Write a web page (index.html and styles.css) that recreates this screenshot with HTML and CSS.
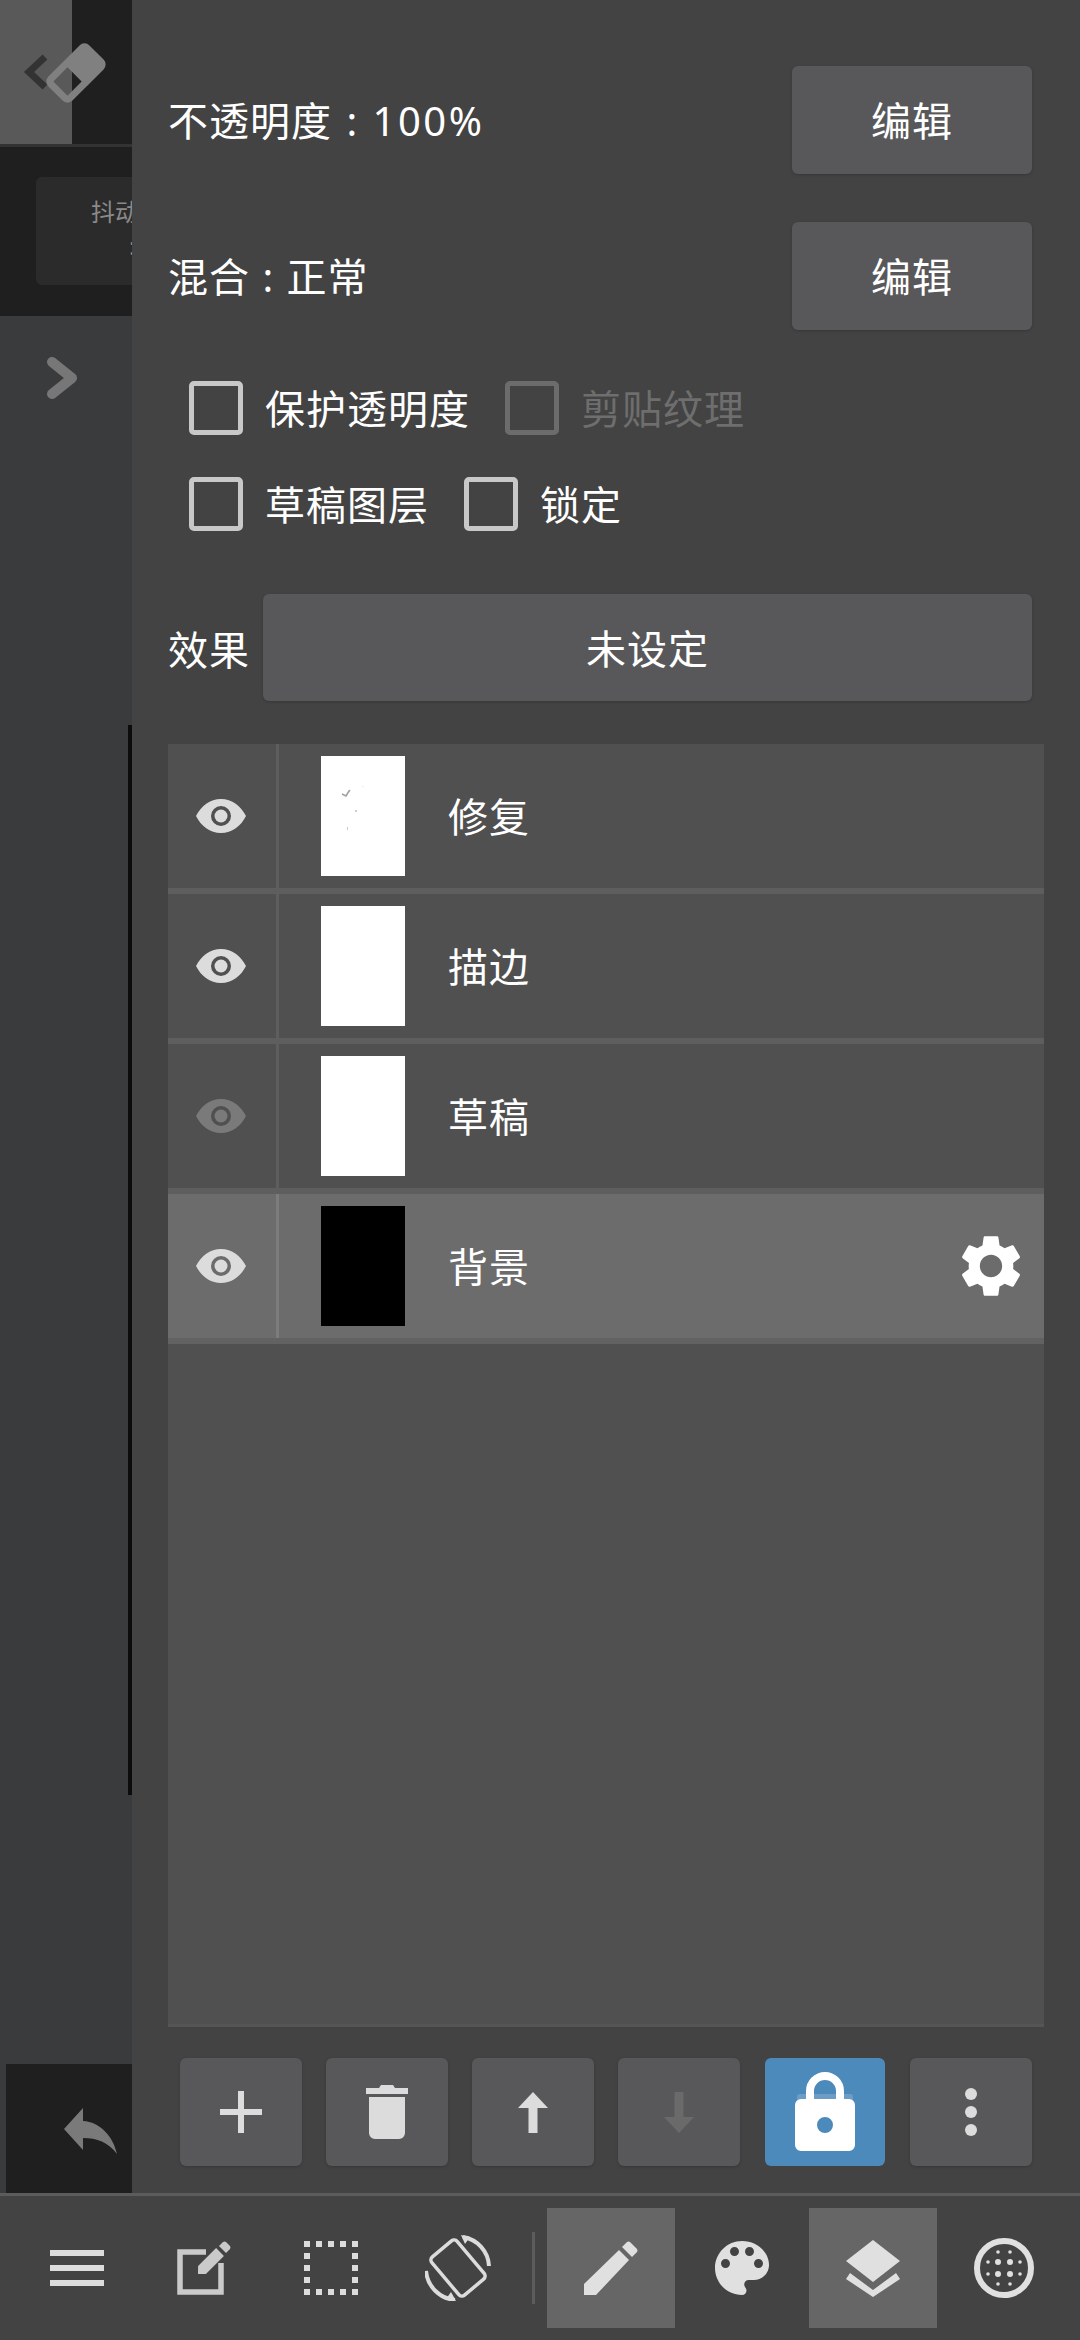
FILE: index.html
```html
<!DOCTYPE html>
<html>
<head>
    <title>图层</title>
    <link rel="stylesheet" href="styles.css">
</head>
<body>
<svg class="defs" width="0" height="0">
    <symbol id="eye" viewBox="0 0 50 34">
        <path fill-rule="evenodd" d="M0 17C5 7 14 0 25 0S45 7 50 17C45 27 36 34 25 34S5 27 0 17ZM25 7a10 10 0 1 0 0 20a10 10 0 1 0 0-20Z"/>
        <circle cx="25" cy="17" r="6.500"/>
    </symbol>
</svg>
<div class="app">
    <div class="main">
        <div class="side">
            <div class="side-top">
                <div class="side-tile"></div>
                <svg class="side-tool" width="132" height="144" viewBox="0 0 132 144">
                    <path d="M45 57L29 72L45 87" fill="none" stroke="#333" stroke-width="7"/>
                    <g transform="translate(76 73) rotate(-45)">
                        <path fill="#808080" fill-rule="evenodd" d="M-22 -17H22a7 7 0 0 1 7 7V10a7 7 0 0 1-7 7H-22a7 7 0 0 1-7-7V-10a7 7 0 0 1 7-7ZM-22 -10V10H-2V-10Z"/>
                    </g>
                </svg>
            </div>
            <div class="side-line"></div>
            <div class="side-dark">
                <div class="side-card">
                    <div class="card-title">抖动修正强度</div>
                    <div class="card-note">:</div>
                </div>
            </div>
            <div class="side-nav">
                <svg width="30" height="45" viewBox="0 0 30 45">
                    <path d="M5 6L25 22L5 38" fill="none" stroke="#777" stroke-width="10" stroke-linejoin="round" stroke-linecap="round"/>
                </svg>
            </div>
            <div class="side-undo">
                <svg width="53" height="46" viewBox="0 0 53 46">
                    <path fill="#7a7a7a" d="M0 21L19 0V13C36 14 49 28 53 46C44 34 33 30 19 30V42Z"/>
                </svg>
            </div>
            <div class="canvas-edge"></div>
        </div>

        <div class="panel">
            <div class="field">
                <span>不透明度 : <span class="num">100%</span></span>
                <div class="btn btn-edit">编辑</div>
            </div>
            <div class="field field-blend">
                <span>混合 : 正常</span>
                <div class="btn btn-edit">编辑</div>
            </div>

            <div class="checks">
                <div class="check"></div><span>保护透明度</span>
                <div class="check check-off"></div><span class="label-off">剪贴纹理</span>
            </div>
            <div class="checks checks-second">
                <div class="check"></div><span>草稿图层</span>
                <div class="check"></div><span>锁定</span>
            </div>

            <div class="effect">
                <span>效果</span>
                <div class="btn btn-effect">未设定</div>
            </div>

            <div class="layers">
                <div class="layer">
                    <div class="layer-eye"><svg width="50" height="34"><use href="#eye"/></svg></div>
                    <div class="thumb">
                        <svg width="84" height="120" viewBox="0 0 84 120">
                            <path d="M21 38L25 40L28 35M26 38L29 34" fill="none" stroke="#a0a0a0" stroke-width="1.500"/>
                            <rect x="34" y="54" width="2" height="2" fill="#ccc"/>
                            <rect x="26" y="71" width="1" height="3" fill="#ccc"/>
                            <rect x="41" y="30" width="2" height="1" fill="#eee"/>
                        </svg>
                    </div>
                    <div class="layer-name">修复</div>
                </div>
                <div class="layer">
                    <div class="layer-eye"><svg width="50" height="34"><use href="#eye"/></svg></div>
                    <div class="thumb"></div>
                    <div class="layer-name">描边</div>
                </div>
                <div class="layer">
                    <div class="layer-eye eye-off"><svg width="50" height="34"><use href="#eye"/></svg></div>
                    <div class="thumb"></div>
                    <div class="layer-name">草稿</div>
                </div>
                <div class="layer layer-active">
                    <div class="layer-eye"><svg width="50" height="34"><use href="#eye"/></svg></div>
                    <div class="thumb thumb-black"></div>
                    <div class="layer-name">背景</div>
                    <svg class="gear" width="62" height="62" viewBox="2 2 20 20">
                        <path fill="#fff" d="M19.14 12.94c.04-.3.06-.61.06-.94 0-.32-.02-.64-.07-.94l2.03-1.58c.18-.14.23-.41.12-.61l-1.92-3.32c-.12-.22-.37-.29-.59-.22l-2.39.96c-.5-.38-1.03-.7-1.62-.94l-.36-2.54c-.04-.24-.24-.41-.48-.41h-3.84c-.24 0-.43.17-.47.41l-.36 2.54c-.59.24-1.13.57-1.62.94l-2.39-.96c-.22-.08-.47 0-.59.22L2.74 8.87c-.12.21-.08.47.12.61l2.03 1.58c-.05.3-.09.63-.09.94s.02.64.07.94l-2.03 1.58c-.18.14-.23.41-.12.61l1.92 3.32c.12.22.37.29.59.22l2.39-.96c.5.38 1.03.7 1.62.94l.36 2.54c.05.24.24.41.48.41h3.84c.24 0 .44-.17.47-.41l.36-2.54c.59-.24 1.13-.56 1.62-.94l2.39.96c.22.08.47 0 .59-.22l1.92-3.32c.12-.22.07-.47-.12-.61l-2.01-1.58zM12 15.6c-1.98 0-3.6-1.62-3.6-3.6s1.62-3.6 3.6-3.6 3.6 1.62 3.6 3.6-1.62 3.6-3.6 3.6z"/>
                    </svg>
                </div>
            </div>

            <div class="actions">
                <div class="btn">
                    <svg width="42" height="42" viewBox="0 0 42 42"><path fill="#dcdcdc" d="M18 0h6v18h18v6H24v18h-6V24H0v-6h18Z"/></svg>
                </div>
                <div class="btn">
                    <svg width="42" height="54" viewBox="0 0 42 54">
                        <path fill="#dcdcdc" d="M0 3H13L15 0H27L29 3H42V9H0ZM3 12H39V48a6 6 0 0 1-6 6H9a6 6 0 0 1-6-6Z"/>
                    </svg>
                </div>
                <div class="btn">
                    <svg width="30" height="41" viewBox="0 0 30 41"><path fill="#dcdcdc" d="M15 0L30 16H19.500V41H10.500V16H0Z"/></svg>
                </div>
                <div class="btn">
                    <svg width="30" height="41" viewBox="0 0 30 41"><path fill="#6a6a6a" d="M15 41L30 25H19.500V0H10.500V25H0Z"/></svg>
                </div>
                <div class="btn btn-lock">
                    <svg width="60" height="80" viewBox="0 0 60 80">
                        <rect x="2" y="22" width="56" height="8" rx="3" fill="#6d9cc5"/>
                        <path d="M15 30V19a15 15 0 0 1 30 0V30" fill="none" stroke="#fff" stroke-width="8"/>
                        <path fill="#fff" fill-rule="evenodd" d="M6 27H54a6 6 0 0 1 6 6V73a6 6 0 0 1-6 6H6a6 6 0 0 1-6-6V33a6 6 0 0 1 6-6ZM30 45a8 8 0 1 0 0 16a8 8 0 1 0 0-16Z"/>
                    </svg>
                </div>
                <div class="btn">
                    <svg width="12" height="48" viewBox="0 0 12 48" fill="#dcdcdc">
                        <circle cx="6" cy="6" r="6"/><circle cx="6" cy="24" r="6"/><circle cx="6" cy="42" r="6"/>
                    </svg>
                </div>
            </div>
        </div>
    </div>

    <div class="toolbar">
        <div class="tool">
            <svg width="54" height="36" viewBox="0 0 54 36" fill="#dcdcdc">
                <rect width="54" height="6"/><rect y="15" width="54" height="6"/><rect y="30" width="54" height="6"/>
            </svg>
        </div>
        <div class="tool">
            <svg width="54" height="54" viewBox="0 0 54 54">
                <path d="M29 11H3V51H44V22" fill="none" stroke="#cacaca" stroke-width="5.500"/>
                <path fill="#cacaca" d="M21 33L21.100 25.100L39.100 7.100L46.900 14.900L28.900 32.900Z"/>
                <path fill="#cacaca" d="M42 5L46 1Q47.500 0 49 1L53 5Q54 6.500 53 8L49 12Z"/>
            </svg>
        </div>
        <div class="tool">
            <svg width="54" height="54" viewBox="0 0 54 54">
                <rect x="3" y="3" width="48" height="48" fill="none" stroke="#dcdcdc" stroke-width="6" stroke-dasharray="6 6" stroke-dashoffset="3"/>
            </svg>
        </div>
        <div class="tool">
            <svg width="66" height="66" viewBox="0 0 66 66" fill="none" stroke="#dcdcdc">
                <rect x="8" y="16.500" width="50" height="33" rx="4" stroke-width="3.500" transform="rotate(50 33 33)"/>
                <path d="M38 2A31 31 0 0 1 64 31" stroke-width="4"/>
                <path d="M1 36A32 32 0 0 0 30 65" stroke-width="4"/>
                <path d="M36 0L45 2L40 9Z" fill="#dcdcdc" stroke="none"/>
                <path d="M31 66L21 64L26 57Z" fill="#dcdcdc" stroke="none"/>
            </svg>
        </div>
        <div class="tool-divider"></div>
        <div class="tile tile-on">
            <svg width="54" height="54" viewBox="0 0 54 54" fill="#e0e0e0">
                <path d="M0 54V43L35 9L45 19L12 54Z"/>
                <path d="M38 6L43 1Q44.500 0 46 1L53 8Q54 9.500 53 11L48 16Z"/>
            </svg>
        </div>
        <div class="tile">
            <svg width="54" height="54" viewBox="3 3 18 18">
                <path fill="#e0e0e0" d="M12 3c-4.970 0-9 4.030-9 9s4.030 9 9 9c.83 0 1.500-.67 1.500-1.500 0-.39-.15-.74-.39-1.010-.23-.26-.38-.61-.38-.99 0-.83.67-1.500 1.500-1.500H16c2.760 0 5-2.240 5-5 0-4.420-4.030-8-9-8zm-5.500 9c-.83 0-1.500-.67-1.500-1.500S5.670 9 6.500 9 8 9.670 8 10.500 7.330 12 6.500 12zm3-4C8.670 8 8 7.330 8 6.500S8.670 5 9.500 5s1.500.67 1.500 1.500S10.330 8 9.500 8zm5 0c-.83 0-1.500-.67-1.500-1.500S13.670 5 14.500 5s1.500.67 1.500 1.500S15.330 8 14.500 8zm3 4c-.83 0-1.500-.67-1.500-1.500S16.670 9 17.500 9s1.500.67 1.500 1.500-.67 1.500-1.500 1.500z"/>
            </svg>
        </div>
        <div class="tile tile-on">
            <svg width="54" height="57" viewBox="0 0 54 57" fill="#e0e0e0">
                <path d="M27 0L54 21L27 42L0 21Z"/>
                <path d="M4 33L27 50L50 33L54 39L27 57L0 39Z"/>
            </svg>
        </div>
        <div class="tile">
            <svg width="60" height="60" viewBox="0 0 60 60" fill="#e0e0e0">
                <circle cx="30" cy="30" r="27" fill="none" stroke="#e0e0e0" stroke-width="6"/>
                <circle cx="24" cy="24" r="3"/><circle cx="36" cy="24" r="3"/>
                <circle cx="24" cy="36" r="3"/><circle cx="36" cy="36" r="3"/>
                <circle cx="24" cy="14" r="1.800"/><circle cx="36" cy="14" r="1.800"/>
                <circle cx="24" cy="46" r="1.800"/><circle cx="36" cy="46" r="1.800"/>
                <circle cx="14" cy="24" r="1.800"/><circle cx="14" cy="36" r="1.800"/>
                <circle cx="46" cy="24" r="1.800"/><circle cx="46" cy="36" r="1.800"/>
            </svg>
        </div>
    </div>
</div>
</body>
</html>
```

FILE: styles.css
```css
* { box-sizing: border-box; }
body {
    margin: 0;
    background-color: #434343;
    font-family: "Noto Sans", "Noto Sans CJK SC", sans-serif;
    font-size: 40px;
    letter-spacing: 1px;
    color: #fff;
}
svg { display: block; }
.defs { position: absolute; }
.app {
    width: 1080px;
    height: 2340px;
    display: flex;
    flex-direction: column;
    overflow: hidden;
}
.main {
    height: 2193px;
    display: flex;
}

/* strip of the canvas showing behind the panel */
.side {
    position: relative;
    width: 132px;
    display: flex;
    flex-direction: column;
    background-color: #3a3b3d;
    overflow: hidden;
}
.side-top {
    position: relative;
    height: 144px;
    background-color: #1f1f1f;
}
.side-tile {
    width: 72px;
    height: 144px;
    background-color: #595959;
}
.side-tool {
    position: absolute;
    left: 0;
    top: 0;
}
.side-line {
    height: 3px;
    background-color: #333;
}
.side-dark {
    height: 169px;
    padding: 30px 0 0 36px;
    background-color: #1f1f1f;
}
.side-card {
    width: 300px;
    height: 108px;
    padding: 18px 0 0 55px;
    border-radius: 6px;
    background-color: #2b2b2b;
    font-size: 24px;
    letter-spacing: 0;
    line-height: 34px;
    color: #8a8a8a;
}
.card-title { white-space: nowrap; }
.card-note { padding-left: 38px; }
.side-nav {
    flex: 1;
    padding: 40px 0 0 47px;
}
.side-undo {
    height: 129px;
    margin-left: 6px;
    padding: 44px 0 0 58px;
    background-color: #1f1f1f;
}
.canvas-edge {
    position: absolute;
    left: 128px;
    top: 725px;
    width: 4px;
    height: 1070px;
    background-color: #0c0c0c;
}

/* layer panel */
.panel {
    flex: 1;
    padding: 66px 36px 0;
    background-color: #434343;
}
.field {
    height: 108px;
    display: flex;
    justify-content: space-between;
    align-items: center;
    padding-right: 12px;
    word-spacing: 3px;
}
.field > span { padding-bottom: 2px; }
.num { letter-spacing: 2.500px; }
.field-blend {
    margin-top: 48px;
    word-spacing: 1px;
}
.btn {
    display: flex;
    justify-content: center;
    align-items: center;
    border-radius: 6px;
    background-color: #58585a;
    box-shadow: 0 1px 3px rgba(0, 0, 0, 0.2);
}
.btn-edit {
    width: 240px;
    height: 108px;
    padding-bottom: 2px;
}
.checks {
    height: 54px;
    margin-top: 51px;
    padding-left: 21px;
    display: flex;
    align-items: center;
}
.checks-second { margin-top: 42px; }
.check {
    width: 54px;
    height: 54px;
    margin-right: 22px;
    border: 5px solid #c8c8c8;
    border-radius: 5px;
}
.checks span {
    margin-right: 35px;
    padding-bottom: 2px;
}
.check-off { border-color: #6c6c6c; }
.checks .label-off { color: #6e6e6e; }
.effect {
    height: 107px;
    margin-top: 63px;
    padding-right: 12px;
    display: flex;
    align-items: center;
}
.btn-effect {
    flex: 1;
    height: 107px;
    margin-left: 13px;
    padding-bottom: 2px;
}

.layers {
    height: 1283px;
    margin-top: 43px;
    background-color: #505050;
    border-bottom: 3px solid #555;
}
.layer {
    height: 150px;
    display: flex;
    align-items: center;
    border-bottom: 6px solid #5e5e5e;
}
.layer-eye {
    width: 111px;
    height: 100%;
    padding-right: 3px;
    display: flex;
    justify-content: center;
    align-items: center;
    border-right: 3px solid #5e5e5e;
    fill: #dcdcdc;
}
.eye-off { fill: #7a7a7a; }
.thumb {
    width: 84px;
    height: 120px;
    margin: 0 43px 0 42px;
    background-color: #fff;
}
.thumb-black { background-color: #000; }
.layer-name { padding-bottom: 3px; }
.layer-active {
    background-color: #6c6c6c;
    border-bottom-color: #626262;
}
.layer-active .layer-eye { border-right-color: #7c7c7c; }
.gear { margin: 0 22px 0 auto; }

.actions {
    height: 108px;
    margin-top: 31px;
    padding: 0 12px;
    display: grid;
    grid-template-columns: repeat(6, 1fr);
    column-gap: 24px;
}
.btn-lock {
    margin: 0 1px;
    background-color: #4d8abc;
    box-shadow: none;
}

/* bottom toolbar */
.toolbar {
    flex: 1;
    padding: 12px 0 0 13px;
    display: flex;
    align-items: flex-start;
    border-top: 3px solid #5c5c5c;
    background-color: #434343;
}
.tool {
    width: 127px;
    height: 120px;
    display: flex;
    justify-content: center;
    align-items: center;
}
.tool-divider {
    width: 3px;
    height: 72px;
    margin: 24px 12px 0 11px;
    background-color: #5c5c5c;
}
.tile {
    width: 128px;
    height: 120px;
    margin-right: 3px;
    display: flex;
    justify-content: center;
    align-items: center;
}
.tile-on { background-color: #666; }
```
